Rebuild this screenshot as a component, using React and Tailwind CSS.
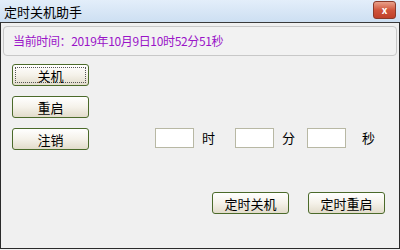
const font = { fontFamily: '"Noto Sans CJK SC", "Liberation Sans", sans-serif' };

const btnClass =
    'flex items-center justify-center w-[77px] h-[22px] rounded-[3px] border border-[#4b6a2a] bg-gradient-to-b from-[#ffffff] via-[#f5f2ea] to-[#e2dccb] text-[13px] text-black leading-none';

function Btn({ label, focused, className }) {
    return (
        <div className={`${btnClass} ${className || ''}`}>
            {focused ? (
                <div className="flex items-center justify-center w-[71px] h-[16px] border border-dotted border-[#555]">
                    {label}
                </div>
            ) : (
                label
            )}
        </div>
    );
}

function TimeBox() {
    return <div className="w-[39px] h-[20px] bg-white border border-[#b8b8a4]" />;
}

export default function App() {
    return (
        <div className="w-[400px] h-[250px] flex flex-col bg-[#f0f0f0]" style={font}>
            <div className="h-[22px] flex items-center justify-between pl-[4px] pr-[4px] bg-gradient-to-b from-[#e3eefa] to-[#cddff2]">
                <span className="text-[13px] text-black leading-none">定时关机助手</span>
                <div className="w-[23px] h-[18px] mt-[-2px] rounded-[3px] border border-[#8a3a2a] bg-gradient-to-b from-[#e8a08a] via-[#d0553c] to-[#c0402a] flex items-center justify-center text-white text-[10px] font-bold leading-none">
                    x
                </div>
            </div>
            <div className="flex-1 flex flex-col border border-[#2a2a2a] border-t-[#3a3a3a] mb-[1px]">
                <div className="mx-[2px] mt-[3px] h-[30px] rounded-[4px] border border-[#c8c8c8] bg-[#f2f2f2] flex items-center pl-[9px]">
                    <span className="text-[12px] tracking-[-0.35px] text-[#9a14c8] leading-none">当前时间：2019年10月9日10时52分51秒</span>
                </div>
                <div className="flex flex-1">
                    <div className="flex flex-col pl-[11px] pt-[8px] gap-[10px]">
                        <Btn label="关机" focused />
                        <Btn label="重启" />
                        <Btn label="注销" />
                    </div>
                    <div className="flex flex-col flex-1">
                        <div className="flex items-center pl-[66px] pt-[72px] text-[13px] text-black">
                            <TimeBox />
                            <span className="ml-[8px] w-[33px]">时</span>
                            <TimeBox />
                            <span className="ml-[8px] w-[25px]">分</span>
                            <TimeBox />
                            <span className="ml-[16px]">秒</span>
                        </div>
                        <div className="flex pl-[123px] pt-[44px] gap-[19px]">
                            <Btn label="定时关机" />
                            <Btn label="定时重启" />
                        </div>
                    </div>
                </div>
            </div>
        </div>
    );
}
